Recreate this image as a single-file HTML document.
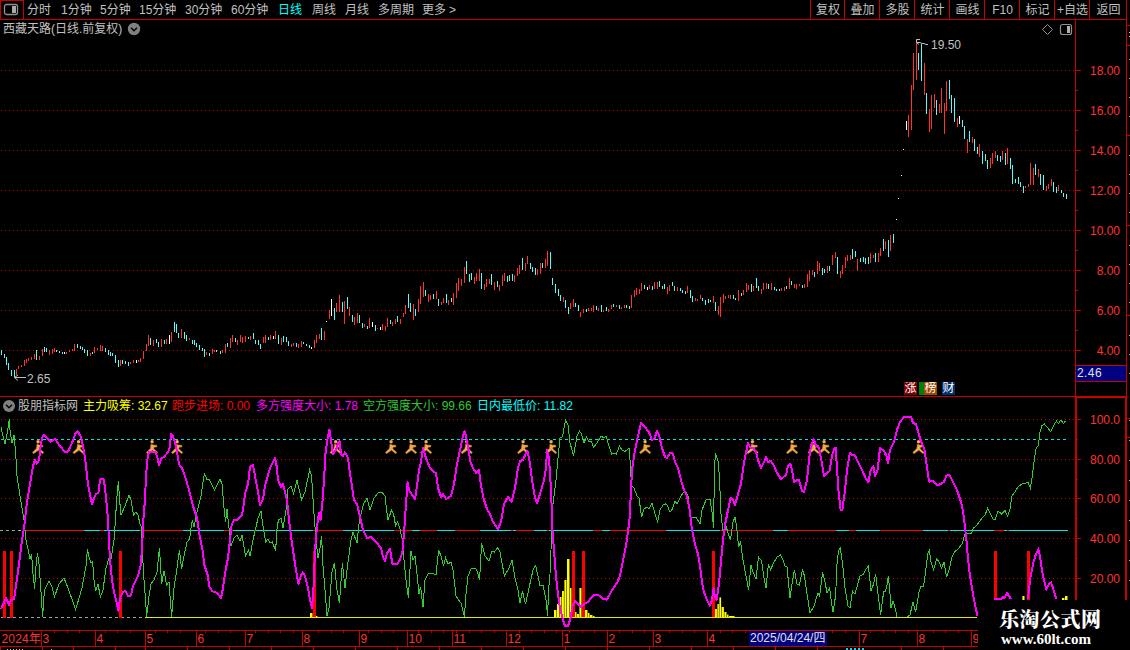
<!DOCTYPE html>
<html lang="zh-CN"><head><meta charset="utf-8"><title>西藏天路</title>
<style>
html,body{margin:0;padding:0;background:#000;}
body{width:1130px;height:650px;overflow:hidden;position:relative;font-family:"Liberation Sans","Noto Sans CJK SC",sans-serif;font-size:12px;color:#c0c0c0;}
#root{position:absolute;left:0;top:0;width:1130px;height:650px;overflow:hidden;background:#000}
#root span{position:absolute;white-space:nowrap;line-height:14px;}
.cy{color:#00ffff}
.btn{text-align:center}
.vs{position:absolute;top:0;width:1px;height:20px;background:#c80000}
.ax{right:10px;color:#ff3232;font-size:12px;transform:scaleY(1.07)}
.mv{position:absolute;top:630px;width:1px;height:17px;background:#c80000}
.bv{position:absolute;top:647px;width:1px;height:3px;background:#c80000}
.tk{position:absolute;top:631px;width:1px;height:2px;background:#c80000}
.mo{top:632px;color:#ff3232;letter-spacing:0.2px}
.pl{transform:scaleY(1.07);letter-spacing:0px}
.tag{color:#fff;width:13px;height:13px;line-height:13px!important;text-align:center;top:382px;overflow:hidden}
</style></head><body><div id="root">
<svg width="1130" height="650" viewBox="0 0 1130 650" style="position:absolute;left:0;top:0" shape-rendering="crispEdges">
<defs>
<g id="run" shape-rendering="auto">
<circle cx="6.1" cy="1.8" r="1.7" fill="#f4b04c"/>
<path d="M5 3.9 L7.6 5 L10.9 5.3 L10.9 6.9 L8.2 7.2 L7.8 8.8 L11.9 12.4 L10.6 13.7 L6.5 10.3 L1.6 13.7 L0.3 12.4 L4.3 8.6 Z" fill="#f0ac4c" stroke="#b87028" stroke-width="0.5"/>
</g>
</defs>
<line x1="1" y1="70.5" x2="1075" y2="70.5" stroke="#c80000" stroke-width="1" stroke-dasharray="1 3"/><line x1="1" y1="110.5" x2="1075" y2="110.5" stroke="#c80000" stroke-width="1" stroke-dasharray="1 3"/><line x1="1" y1="150.5" x2="1075" y2="150.5" stroke="#c80000" stroke-width="1" stroke-dasharray="1 3"/><line x1="1" y1="190.5" x2="1075" y2="190.5" stroke="#c80000" stroke-width="1" stroke-dasharray="1 3"/><line x1="1" y1="230.5" x2="1075" y2="230.5" stroke="#c80000" stroke-width="1" stroke-dasharray="1 3"/><line x1="1" y1="270.5" x2="1075" y2="270.5" stroke="#c80000" stroke-width="1" stroke-dasharray="1 3"/><line x1="1" y1="310.5" x2="1075" y2="310.5" stroke="#c80000" stroke-width="1" stroke-dasharray="1 3"/><line x1="1" y1="350.5" x2="1075" y2="350.5" stroke="#c80000" stroke-width="1" stroke-dasharray="1 3"/>
<line x1="1" y1="419.5" x2="1075" y2="419.5" stroke="#c80000" stroke-width="1" stroke-dasharray="1 3"/><line x1="1" y1="459.5" x2="1075" y2="459.5" stroke="#c80000" stroke-width="1" stroke-dasharray="1 3"/><line x1="1" y1="498.5" x2="1075" y2="498.5" stroke="#c80000" stroke-width="1" stroke-dasharray="1 3"/><line x1="1" y1="538.5" x2="1075" y2="538.5" stroke="#c80000" stroke-width="1" stroke-dasharray="1 3"/><line x1="1" y1="578.5" x2="1075" y2="578.5" stroke="#c80000" stroke-width="1" stroke-dasharray="1 3"/>
<line x1="1" y1="439.5" x2="1066" y2="439.5" stroke="#00e0e0" stroke-width="1" stroke-dasharray="3 3"/>
<line x1="1" y1="617.5" x2="145" y2="617.5" stroke="#a0a0a0" stroke-width="1" stroke-dasharray="3 3"/>
<path d="M16 369h1v6h-1zM18 366h1v3h-1zM21 365h1v2h-1zM24 360h1v6h-1zM26 359h1v4h-1zM28 358h1v3h-1zM31 357h1v3h-1zM34 354h1v5h-1zM39 356h1v4h-1zM42 349h1v7h-1zM49 350h1v5h-1zM52 349h1v5h-1zM54 348h1v4h-1zM66 352h1v2h-1zM69 350h1v2h-1zM72 349h1v2h-1zM74 344h1v7h-1zM90 353h1v3h-1zM94 347h1v6h-1zM97 348h1v2h-1zM100 345h1v6h-1zM102 346h1v5h-1zM120 360h1v6h-1zM130 362h1v2h-1zM133 360h1v3h-1zM138 360h1v2h-1zM140 358h1v4h-1zM143 351h1v8h-1zM146 344h1v7h-1zM148 335h1v11h-1zM153 340h1v6h-1zM161 339h1v8h-1zM166 339h1v5h-1zM171 332h1v10h-1zM181 329h1v9h-1zM189 338h1v2h-1zM206 352h1v3h-1zM212 349h1v5h-1zM214 350h1v2h-1zM222 350h1v3h-1zM225 344h1v9h-1zM230 338h1v10h-1zM232 335h1v7h-1zM237 340h1v5h-1zM240 335h1v7h-1zM242 337h1v6h-1zM245 336h1v6h-1zM250 336h1v4h-1zM263 337h1v6h-1zM265 335h1v8h-1zM270 335h1v5h-1zM275 331h1v8h-1zM281 338h1v7h-1zM291 344h1v3h-1zM293 343h1v3h-1zM298 344h1v4h-1zM301 341h1v6h-1zM314 340h1v8h-1zM316 335h1v8h-1zM319 334h1v5h-1zM324 331h1v9h-1zM329 310h1v9h-1zM336 303h1v9h-1zM339 295h1v17h-1zM344 301h1v23h-1zM349 307h1v9h-1zM354 317h1v8h-1zM357 313h1v10h-1zM364 324h1v3h-1zM369 318h1v10h-1zM377 328h1v1h-1zM382 324h1v6h-1zM385 326h1v5h-1zM387 318h1v9h-1zM392 322h1v4h-1zM395 319h1v5h-1zM400 319h1v5h-1zM403 313h1v4h-1zM405 305h1v9h-1zM413 304h1v16h-1zM418 299h1v13h-1zM420 286h1v18h-1zM423 282h1v15h-1zM428 294h1v8h-1zM430 295h1v5h-1zM436 291h1v8h-1zM441 302h1v3h-1zM443 298h1v5h-1zM448 300h1v5h-1zM453 293h1v12h-1zM456 283h1v15h-1zM458 278h1v13h-1zM461 279h1v7h-1zM464 267h1v16h-1zM474 277h1v7h-1zM476 273h1v8h-1zM479 269h1v12h-1zM484 284h1v6h-1zM486 279h1v8h-1zM489 279h1v5h-1zM494 282h1v8h-1zM499 285h1v6h-1zM502 275h1v11h-1zM504 273h1v8h-1zM514 275h1v7h-1zM517 268h1v8h-1zM519 265h1v9h-1zM525 263h1v8h-1zM527 256h1v8h-1zM537 269h1v6h-1zM540 263h1v11h-1zM545 259h1v9h-1zM547 251h1v15h-1zM563 297h1v5h-1zM570 303h1v6h-1zM573 299h1v8h-1zM580 312h1v5h-1zM583 309h1v4h-1zM588 308h1v3h-1zM591 308h1v3h-1zM593 305h1v7h-1zM598 308h1v3h-1zM603 310h1v2h-1zM608 309h1v3h-1zM611 305h1v4h-1zM616 305h1v2h-1zM621 307h1v2h-1zM624 305h1v3h-1zM631 295h1v13h-1zM634 290h1v7h-1zM636 288h1v7h-1zM639 289h1v5h-1zM641 283h1v8h-1zM649 285h1v4h-1zM654 282h1v7h-1zM657 282h1v7h-1zM667 287h1v7h-1zM669 285h1v6h-1zM677 287h1v4h-1zM687 286h1v7h-1zM695 298h1v3h-1zM697 299h1v2h-1zM700 295h1v4h-1zM713 296h1v7h-1zM718 306h1v9h-1zM720 297h1v20h-1zM723 294h1v9h-1zM725 296h1v3h-1zM728 295h1v3h-1zM730 295h1v4h-1zM738 290h1v11h-1zM743 290h1v5h-1zM746 283h1v9h-1zM748 285h1v5h-1zM753 286h1v5h-1zM761 289h1v5h-1zM763 283h1v7h-1zM766 283h1v6h-1zM771 283h1v7h-1zM781 288h1v3h-1zM784 287h1v4h-1zM789 278h1v11h-1zM794 284h1v4h-1zM796 284h1v5h-1zM799 284h1v2h-1zM804 284h1v4h-1zM807 274h1v13h-1zM809 270h1v11h-1zM812 270h1v5h-1zM817 261h1v13h-1zM819 263h1v8h-1zM827 266h1v7h-1zM832 255h1v10h-1zM835 252h1v6h-1zM840 271h1v7h-1zM842 265h1v9h-1zM845 257h1v11h-1zM847 255h1v6h-1zM850 255h1v5h-1zM857 259h1v12h-1zM870 253h1v10h-1zM873 255h1v3h-1zM878 253h1v9h-1zM880 248h1v8h-1zM885 241h1v8h-1zM890 235h1v16h-1zM908 115h1v22h-1zM911 85h1v45h-1zM913 53h1v37h-1zM916 43h1v37h-1zM924 63h1v32h-1zM929 109h1v23h-1zM931 95h1v34h-1zM934 94h1v14h-1zM939 104h1v9h-1zM941 88h1v25h-1zM944 103h1v31h-1zM946 81h1v30h-1zM957 118h1v9h-1zM967 139h1v14h-1zM972 137h1v6h-1zM979 144h1v13h-1zM990 158h1v10h-1zM992 153h1v11h-1zM995 151h1v7h-1zM1002 151h1v9h-1zM1007 148h1v16h-1zM1025 186h1v2h-1zM1028 184h1v3h-1zM1030 163h1v22h-1zM1033 168h1v17h-1zM1038 169h1v8h-1zM1046 186h1v5h-1zM1048 184h1v5h-1zM1051 179h1v7h-1zM1058 185h1v6h-1z" fill="#ff3232"/>
<path d="M1 350h1v5h-1zM4 354h1v4h-1zM6 357h1v8h-1zM8 363h1v7h-1zM11 370h1v6h-1zM14 370h1v7h-1zM36 350h1v10h-1zM44 347h1v5h-1zM46 348h1v4h-1zM56 350h1v2h-1zM59 351h1v2h-1zM62 352h1v2h-1zM77 344h1v4h-1zM80 346h1v3h-1zM82 347h1v3h-1zM84 349h1v4h-1zM87 350h1v6h-1zM92 352h1v2h-1zM105 348h1v4h-1zM108 350h1v5h-1zM110 352h1v4h-1zM112 353h1v3h-1zM115 355h1v8h-1zM118 360h1v7h-1zM122 360h1v4h-1zM125 361h1v3h-1zM128 362h1v4h-1zM150 338h1v7h-1zM156 339h1v4h-1zM158 342h1v5h-1zM164 340h1v4h-1zM174 322h1v10h-1zM176 324h1v9h-1zM178 333h1v5h-1zM184 332h1v7h-1zM186 335h1v6h-1zM192 340h1v4h-1zM194 340h1v5h-1zM196 343h1v4h-1zM199 345h1v5h-1zM202 348h1v3h-1zM204 349h1v8h-1zM209 353h1v3h-1zM216 350h1v2h-1zM220 351h1v3h-1zM227 343h1v4h-1zM235 338h1v4h-1zM248 337h1v2h-1zM253 333h1v6h-1zM255 340h1v4h-1zM258 340h1v5h-1zM260 344h1v5h-1zM268 337h1v3h-1zM278 335h1v9h-1zM283 336h1v6h-1zM286 337h1v5h-1zM288 341h1v5h-1zM296 343h1v4h-1zM303 342h1v2h-1zM306 344h1v2h-1zM309 345h1v3h-1zM321 328h1v12h-1zM334 308h1v12h-1zM342 302h1v10h-1zM347 297h1v12h-1zM352 315h1v7h-1zM359 315h1v8h-1zM362 323h1v5h-1zM367 326h1v3h-1zM375 325h1v6h-1zM390 320h1v4h-1zM397 316h1v6h-1zM408 294h1v14h-1zM410 303h1v9h-1zM415 309h1v7h-1zM425 290h1v6h-1zM433 294h1v5h-1zM438 299h1v7h-1zM446 294h1v9h-1zM451 298h1v4h-1zM466 261h1v13h-1zM469 274h1v8h-1zM471 273h1v7h-1zM481 273h1v16h-1zM491 274h1v11h-1zM497 281h1v6h-1zM507 276h1v6h-1zM509 275h1v6h-1zM512 274h1v7h-1zM522 258h1v12h-1zM530 263h1v6h-1zM532 267h1v5h-1zM535 268h1v7h-1zM542 263h1v5h-1zM550 252h1v17h-1zM552 278h1v7h-1zM555 284h1v9h-1zM558 289h1v7h-1zM560 295h1v6h-1zM565 300h1v8h-1zM568 307h1v7h-1zM575 303h1v4h-1zM578 305h1v6h-1zM586 309h1v3h-1zM596 306h1v4h-1zM601 305h1v7h-1zM606 307h1v4h-1zM613 304h1v3h-1zM619 305h1v4h-1zM626 305h1v3h-1zM629 306h1v3h-1zM644 285h1v4h-1zM652 286h1v4h-1zM659 281h1v6h-1zM662 286h1v3h-1zM664 284h1v5h-1zM672 282h1v4h-1zM674 286h1v5h-1zM680 288h1v3h-1zM682 290h1v3h-1zM685 291h1v3h-1zM690 290h1v8h-1zM692 296h1v6h-1zM702 298h1v3h-1zM705 300h1v5h-1zM708 299h1v4h-1zM710 300h1v2h-1zM715 302h1v9h-1zM733 295h1v4h-1zM735 298h1v2h-1zM741 293h1v3h-1zM751 284h1v8h-1zM756 278h1v10h-1zM758 286h1v5h-1zM768 284h1v5h-1zM774 287h1v3h-1zM776 289h1v2h-1zM779 289h1v2h-1zM786 286h1v3h-1zM791 281h1v4h-1zM802 285h1v3h-1zM814 272h1v5h-1zM822 268h1v7h-1zM824 269h1v4h-1zM829 266h1v5h-1zM837 257h1v17h-1zM852 249h1v10h-1zM855 251h1v6h-1zM860 258h1v4h-1zM863 257h1v5h-1zM865 258h1v6h-1zM868 257h1v7h-1zM875 253h1v9h-1zM883 239h1v12h-1zM888 240h1v17h-1zM893 234h1v9h-1zM918 53h1v17h-1zM921 44h1v37h-1zM926 93h1v21h-1zM936 100h1v15h-1zM949 80h1v19h-1zM951 95h1v18h-1zM954 98h1v24h-1zM962 120h1v7h-1zM964 126h1v13h-1zM969 131h1v11h-1zM974 139h1v12h-1zM977 147h1v7h-1zM982 151h1v13h-1zM985 154h1v7h-1zM987 160h1v9h-1zM997 155h1v6h-1zM1000 156h1v6h-1zM1005 153h1v12h-1zM1010 158h1v11h-1zM1012 165h1v19h-1zM1015 179h1v4h-1zM1018 177h1v7h-1zM1020 182h1v5h-1zM1023 186h1v7h-1zM1035 164h1v11h-1zM1040 174h1v11h-1zM1043 175h1v15h-1zM1053 182h1v10h-1zM1056 187h1v6h-1zM1061 190h1v3h-1zM1063 193h1v4h-1zM1066 194h1v5h-1z" fill="#54fcfc"/>
<path d="M64 352h1v2h-1zM136 360h1v3h-1zM169 335h1v9h-1zM273 336h1v3h-1zM311 347h1v2h-1zM326 321h1v1h-1zM331 299h1v17h-1zM372 322h1v5h-1zM380 327h1v3h-1zM647 287h1v3h-1zM896 219h1v1h-1zM898 198h1v1h-1zM901 175h1v1h-1zM903 149h1v1h-1zM906 121h1v9h-1zM959 116h1v8h-1z" fill="#ffffff"/>

<rect x="310.0" y="613.0" width="2.5" height="4.5" fill="#ffff00" shape-rendering="auto"/><rect x="316.0" y="616.0" width="1.5" height="1.5" fill="#ffff00" shape-rendering="auto"/><rect x="554.0" y="610.0" width="2.5" height="7.5" fill="#ffff00" shape-rendering="auto"/><rect x="557.0" y="604.0" width="2.1" height="13.5" fill="#ffff00" shape-rendering="auto"/><rect x="559.6" y="597.0" width="1.9" height="20.5" fill="#ffff00" shape-rendering="auto"/><rect x="562.0" y="591.0" width="1.9" height="26.5" fill="#ffff00" shape-rendering="auto"/><rect x="564.4" y="580.0" width="2.1" height="37.5" fill="#ffff00" shape-rendering="auto"/><rect x="567.0" y="559.0" width="2.5" height="58.5" fill="#ffff00" shape-rendering="auto"/><rect x="570.0" y="588.0" width="1.5" height="29.5" fill="#ffff00" shape-rendering="auto"/><rect x="575.0" y="612.0" width="1.5" height="5.5" fill="#ffff00" shape-rendering="auto"/><rect x="577.0" y="614.0" width="1.9" height="3.5" fill="#ffff00" shape-rendering="auto"/><rect x="579.4" y="588.0" width="2.1" height="29.5" fill="#ffff00" shape-rendering="auto"/><rect x="585.0" y="610.0" width="2.5" height="7.5" fill="#ffff00" shape-rendering="auto"/><rect x="588.0" y="613.0" width="1.5" height="4.5" fill="#ffff00" shape-rendering="auto"/><rect x="590.0" y="615.0" width="2.5" height="2.5" fill="#ffff00" shape-rendering="auto"/><rect x="593.0" y="616.0" width="1.5" height="1.5" fill="#ffff00" shape-rendering="auto"/><rect x="715.0" y="609.0" width="1.9" height="8.5" fill="#ffff00" shape-rendering="auto"/><rect x="717.4" y="604.0" width="1.5" height="13.5" fill="#ffff00" shape-rendering="auto"/><rect x="719.4" y="597.4" width="1.7" height="20.1" fill="#ffff00" shape-rendering="auto"/><rect x="721.6" y="607.0" width="2.3" height="10.5" fill="#ffff00" shape-rendering="auto"/><rect x="724.4" y="612.0" width="2.1" height="5.5" fill="#ffff00" shape-rendering="auto"/><rect x="727.0" y="614.6" width="1.5" height="2.9" fill="#ffff00" shape-rendering="auto"/><rect x="729.0" y="616.0" width="5.5" height="1.5" fill="#ffff00" shape-rendering="auto"/><rect x="1022.4" y="596.0" width="2.1" height="4.0" fill="#ffff00" shape-rendering="auto"/><rect x="1062.0" y="598.0" width="2.5" height="2.0" fill="#ffff00" shape-rendering="auto"/><rect x="1065.0" y="596.0" width="2.5" height="4.0" fill="#ffff00" shape-rendering="auto"/><rect x="3.0" y="551.0" width="3.0" height="66.5" fill="#ff0000"/><rect x="10.0" y="551.0" width="3.0" height="66.5" fill="#ff0000"/><rect x="119.0" y="551.0" width="3.0" height="66.5" fill="#ff0000"/><rect x="313.0" y="551.0" width="3.0" height="66.5" fill="#ff0000"/><rect x="572.0" y="551.0" width="3.0" height="66.5" fill="#ff0000"/><rect x="582.0" y="551.0" width="3.0" height="66.5" fill="#ff0000"/><rect x="712.0" y="551.0" width="3.0" height="66.5" fill="#ff0000"/><rect x="994.0" y="551.0" width="3.0" height="49.0" fill="#ff0000"/><rect x="1027.4" y="551.0" width="2.6" height="49.0" fill="#ff0000"/>
<line x1="0" y1="530.5" x2="23" y2="530.5" stroke="#a0a0a0" stroke-width="1" stroke-dasharray="3 3"/><rect x="23" y="529.6" width="61" height="1.8" fill="#ff0000"/><rect x="84" y="529.6" width="16" height="1.8" fill="#00e8e8"/><rect x="100" y="529.6" width="4" height="1.8" fill="#ff0000"/><rect x="104" y="529.6" width="36" height="1.8" fill="#00e8e8"/><rect x="140" y="529.6" width="43" height="1.8" fill="#ff0000"/><rect x="183" y="529.6" width="37" height="1.8" fill="#00e8e8"/><rect x="220" y="529.6" width="4" height="1.8" fill="#00e8e8"/><rect x="224" y="529.6" width="9" height="1.8" fill="#ff0000"/><rect x="233" y="529.6" width="21" height="1.8" fill="#00e8e8"/><rect x="254" y="529.6" width="2" height="1.8" fill="#ff0000"/><rect x="256" y="529.6" width="19" height="1.8" fill="#00e8e8"/><rect x="275" y="529.6" width="2" height="1.8" fill="#ff0000"/><rect x="277" y="529.6" width="36" height="1.8" fill="#00e8e8"/><rect x="313" y="529.6" width="30" height="1.8" fill="#ff0000"/><rect x="343" y="529.6" width="51" height="1.8" fill="#00e8e8"/><rect x="394" y="529.6" width="18" height="1.8" fill="#ff0000"/><rect x="412" y="529.6" width="8" height="1.8" fill="#00e8e8"/><rect x="420" y="529.6" width="17" height="1.8" fill="#ff0000"/><rect x="437" y="529.6" width="9" height="1.8" fill="#00e8e8"/><rect x="446" y="529.6" width="9" height="1.8" fill="#00e8e8"/><rect x="455" y="529.6" width="25" height="1.8" fill="#ff0000"/><rect x="480" y="529.6" width="31" height="1.8" fill="#00e8e8"/><rect x="511" y="529.6" width="2" height="1.8" fill="#ff0000"/><rect x="513" y="529.6" width="3" height="1.8" fill="#00e8e8"/><rect x="516" y="529.6" width="18" height="1.8" fill="#ff0000"/><rect x="534" y="529.6" width="13" height="1.8" fill="#00e8e8"/><rect x="547" y="529.6" width="2" height="1.8" fill="#ff0000"/><rect x="549" y="529.6" width="44" height="1.8" fill="#00e8e8"/><rect x="593" y="529.6" width="9" height="1.8" fill="#ff0000"/><rect x="602" y="529.6" width="8" height="1.8" fill="#00e8e8"/><rect x="610" y="529.6" width="56" height="1.8" fill="#ff0000"/><rect x="660" y="529.6" width="6" height="1.8" fill="#ff0000"/><rect x="666" y="529.6" width="54" height="1.8" fill="#00e8e8"/><rect x="720" y="529.6" width="53" height="1.8" fill="#ff0000"/><rect x="773" y="529.6" width="15" height="1.8" fill="#00e8e8"/><rect x="788" y="529.6" width="48" height="1.8" fill="#ff0000"/><rect x="836" y="529.6" width="13" height="1.8" fill="#00e8e8"/><rect x="849" y="529.6" width="7" height="1.8" fill="#ff0000"/><rect x="856" y="529.6" width="24" height="1.8" fill="#00e8e8"/><rect x="880" y="529.6" width="6" height="1.8" fill="#ff0000"/><rect x="886" y="529.6" width="37" height="1.8" fill="#ff0000"/><rect x="923" y="529.6" width="25" height="1.8" fill="#00e8e8"/><rect x="948" y="529.6" width="2" height="1.8" fill="#ff0000"/><rect x="950" y="529.6" width="44" height="1.8" fill="#00e8e8"/><rect x="994" y="529.6" width="10" height="1.8" fill="#ff0000"/><rect x="1004" y="529.6" width="3" height="1.8" fill="#00e8e8"/><rect x="1007" y="529.6" width="2" height="1.8" fill="#ff0000"/><rect x="1009" y="529.6" width="59" height="1.8" fill="#00e8e8"/>
<polyline points="1.0,427.0 3.0,436.0 5.0,444.0 7.0,434.0 9.4,419.0 10.0,430.0 12.0,443.0 14.0,435.0 15.6,452.0 17.0,476.0 20.0,496.0 23.0,514.0 24.0,520.0 26.0,540.0 29.0,554.0 30.0,559.0 31.6,554.0 33.0,574.0 34.6,589.0 36.0,566.0 37.4,553.0 39.0,564.0 41.0,592.0 42.6,617.0 44.4,590.0 49.0,581.0 52.4,588.0 54.4,597.0 59.0,584.0 64.0,578.0 68.0,588.0 75.6,609.6 82.0,588.0 86.0,566.0 87.4,549.0 89.0,557.0 91.0,563.0 92.6,562.0 94.0,580.0 95.6,591.0 98.0,584.0 100.4,597.0 103.0,590.0 106.0,568.0 109.0,558.0 111.0,559.0 114.0,540.0 115.6,518.0 116.6,500.0 118.4,481.0 119.6,500.0 121.0,515.0 125.0,506.0 129.0,495.0 131.0,500.0 133.6,515.0 136.0,512.0 138.0,515.0 140.0,524.0 141.0,526.0 142.4,552.0 144.0,580.0 145.6,600.0 146.6,617.0 149.0,596.0 151.0,584.0 154.0,580.0 157.0,572.0 159.4,548.0 160.6,566.0 161.6,584.0 164.0,571.0 166.6,585.0 169.0,582.0 171.6,617.0 174.0,588.0 177.0,568.0 179.4,550.0 181.6,569.0 184.0,556.0 187.0,542.0 189.6,539.0 191.0,528.0 192.4,520.0 194.0,527.0 197.0,512.0 201.0,496.0 204.4,473.0 207.0,480.0 209.0,479.0 214.4,490.0 220.0,479.0 222.0,484.0 224.0,508.0 225.6,522.0 227.0,509.0 229.0,528.0 231.0,546.0 234.0,538.0 237.0,535.0 240.0,541.0 242.0,535.0 245.6,556.0 248.4,550.0 250.0,556.0 253.0,540.0 256.0,527.0 258.0,518.0 261.0,511.0 263.0,526.0 265.6,542.0 268.0,539.0 270.0,543.0 272.4,542.0 275.6,551.0 277.0,529.0 278.4,520.0 281.0,518.0 283.0,528.0 285.0,516.0 287.0,504.0 288.0,489.0 291.0,486.0 293.6,494.0 297.0,480.0 299.0,489.0 301.6,500.0 305.0,492.0 309.6,470.0 311.6,476.0 313.0,499.0 314.0,514.0 315.6,535.0 318.0,558.0 320.0,548.0 321.6,536.0 323.0,566.0 325.0,590.0 327.0,616.0 329.0,608.0 332.0,572.0 334.4,563.0 337.0,590.0 339.4,603.0 342.4,563.0 345.0,588.0 348.0,562.0 351.0,540.0 353.0,532.0 357.0,543.0 359.0,524.0 361.0,514.0 363.6,504.0 367.0,498.0 370.0,510.0 374.0,498.0 378.0,493.0 382.0,492.0 385.0,496.0 386.4,508.0 388.0,520.0 391.6,510.0 393.6,514.0 395.6,526.0 397.6,522.0 400.0,529.0 402.0,538.0 404.0,560.0 406.0,580.0 408.4,598.0 411.0,551.0 413.0,560.0 415.0,556.0 417.0,574.0 419.0,594.0 420.6,587.0 423.0,607.0 425.0,580.0 428.0,574.0 432.0,573.0 436.0,575.0 438.6,550.0 441.0,556.0 443.6,566.0 445.6,558.0 448.0,564.0 451.0,562.0 453.0,570.0 456.0,596.0 458.0,599.0 461.0,603.0 464.4,617.0 466.0,594.0 468.0,576.0 471.0,569.0 475.6,568.4 477.6,572.0 479.6,580.0 481.6,543.0 485.0,556.0 489.0,561.0 492.0,551.0 494.4,552.0 497.6,547.6 500.0,552.0 504.4,576.0 509.0,568.0 512.0,560.0 515.0,578.0 518.0,590.0 520.0,603.0 522.4,591.0 525.6,604.0 529.0,588.0 533.0,570.0 535.6,565.6 538.0,576.0 540.0,586.0 543.0,585.0 546.0,600.0 547.6,616.0 548.6,590.0 550.0,574.0 551.0,550.0 552.4,512.0 553.0,504.0 556.0,480.0 558.0,458.0 560.0,438.0 562.4,437.0 565.6,420.0 568.0,425.0 570.0,443.0 573.6,455.6 577.0,436.0 579.4,431.0 581.0,433.0 584.0,443.0 586.4,437.0 589.0,442.0 591.0,441.0 593.6,447.0 597.0,443.0 601.0,436.0 604.0,438.0 606.0,436.0 609.0,446.0 611.6,454.0 614.0,453.0 616.4,454.0 619.4,446.0 622.0,450.0 625.0,451.6 629.0,448.0 630.0,460.0 631.6,486.0 634.0,488.0 637.0,496.0 639.0,498.0 641.6,517.0 644.0,509.0 647.0,507.0 649.0,509.0 652.0,503.0 655.0,514.0 657.6,522.0 660.0,510.0 663.0,505.0 665.6,504.0 667.0,505.0 670.0,512.0 672.4,509.0 675.0,501.0 677.0,504.0 681.0,496.0 684.0,492.0 686.0,492.4 688.0,496.0 689.6,512.0 691.0,518.0 696.0,517.0 700.0,524.0 702.0,510.0 706.0,500.0 710.0,499.0 712.0,512.0 713.6,528.0 714.4,470.0 715.4,453.0 718.0,461.0 719.4,476.0 721.0,514.0 723.6,536.0 726.0,526.0 728.0,533.0 730.4,540.0 733.0,522.0 735.0,517.0 736.6,527.0 738.6,547.0 740.6,542.0 743.0,560.0 746.0,576.0 748.6,590.0 751.0,565.0 753.0,572.0 756.0,579.0 758.4,557.0 761.6,561.0 764.0,578.0 766.0,588.0 768.4,564.0 770.6,570.0 773.0,564.0 777.0,557.0 780.6,555.0 783.0,560.0 785.0,566.0 787.0,567.0 790.0,598.0 792.6,580.0 794.4,570.0 797.0,584.0 799.4,585.0 802.6,569.0 804.4,576.0 807.0,594.0 810.0,613.0 814.0,606.0 818.0,593.0 819.6,596.0 822.6,572.0 825.0,582.0 827.0,593.0 829.6,588.0 831.6,604.0 833.0,612.0 835.6,596.0 837.0,564.0 838.4,551.0 840.4,548.0 843.0,568.0 845.0,588.0 848.0,606.0 850.0,608.0 852.4,591.0 855.0,594.0 860.0,576.0 863.6,574.0 866.0,569.0 868.4,566.0 871.0,591.0 873.6,584.0 875.6,574.0 878.0,594.0 880.6,615.0 883.6,592.0 885.6,591.0 887.0,585.0 888.4,575.6 890.0,594.0 891.0,608.0 893.0,601.0 894.4,605.0 897.0,617.0 907.0,617.0 910.0,615.0 913.0,602.0 915.6,612.0 919.0,592.0 921.0,586.0 923.6,586.4 926.0,568.0 928.0,553.0 929.4,550.0 931.0,562.0 933.6,570.0 936.6,558.6 939.0,562.0 941.6,568.0 944.0,562.0 946.6,577.0 949.0,570.0 952.0,557.0 954.4,552.0 958.0,549.0 962.0,544.0 965.0,534.0 968.0,533.0 971.0,534.0 973.6,528.0 977.0,525.0 982.0,518.0 985.0,515.0 987.6,508.4 990.0,513.0 993.0,519.0 995.0,519.6 998.0,511.0 1001.6,514.0 1005.0,510.6 1007.6,516.4 1010.0,509.0 1012.0,496.0 1015.0,492.0 1018.0,487.0 1022.0,484.0 1028.0,482.4 1030.4,488.0 1032.0,478.0 1034.0,462.0 1036.0,449.0 1038.4,445.0 1040.0,432.0 1042.0,425.6 1044.4,424.0 1047.0,427.0 1050.6,431.6 1054.0,425.0 1056.4,421.0 1058.4,423.6 1061.0,420.0 1063.6,423.6 1065.6,420.6" fill="none" stroke="#32cd32" stroke-width="1" shape-rendering="crispEdges"/>
<rect x="145" y="617" width="832" height="1.4" fill="#e8e800"/>
<use href="#run" x="32.0" y="440"/><use href="#run" x="72.5" y="440"/><use href="#run" x="146.0" y="440"/><use href="#run" x="171.0" y="440"/><use href="#run" x="329.6" y="440"/><use href="#run" x="385.0" y="440"/><use href="#run" x="405.0" y="440"/><use href="#run" x="420.0" y="440"/><use href="#run" x="460.6" y="440"/><use href="#run" x="517.0" y="440"/><use href="#run" x="545.0" y="440"/><use href="#run" x="639.0" y="440"/><use href="#run" x="746.4" y="440"/><use href="#run" x="786.0" y="440"/><use href="#run" x="807.6" y="440"/><use href="#run" x="818.0" y="440"/><use href="#run" x="912.4" y="440"/>
<polyline points="1.0,609.0 6.0,598.0 9.0,605.0 11.0,600.0 14.0,599.0 16.0,586.0 19.0,564.0 22.0,540.0 24.0,528.0 27.0,502.0 30.0,484.0 33.0,466.0 35.0,460.0 37.0,463.6 39.0,460.0 41.0,443.0 42.4,437.0 44.4,435.0 48.0,439.0 50.4,441.6 55.0,439.0 60.0,446.0 65.0,452.0 68.0,451.6 72.0,443.0 75.6,433.0 77.6,431.0 81.0,437.0 83.0,446.0 85.0,458.0 86.4,470.0 88.0,484.0 90.0,494.0 92.0,504.0 94.0,498.0 96.0,494.0 98.4,493.0 100.0,480.0 102.0,478.4 104.0,480.0 105.6,494.0 107.0,508.0 108.0,520.0 109.0,540.0 110.0,560.0 112.0,580.0 114.0,592.0 117.0,604.0 118.4,611.0 120.0,598.0 123.0,592.0 125.6,591.0 128.0,596.0 131.0,595.6 133.0,586.0 138.0,576.0 141.0,564.0 142.4,540.0 143.6,516.0 145.0,500.0 146.0,476.0 147.6,458.0 149.0,452.0 155.0,451.6 157.0,456.0 159.0,465.0 161.6,458.0 164.0,457.0 168.0,452.0 169.6,448.0 171.0,434.0 173.0,436.0 176.0,446.0 178.0,458.0 179.0,464.4 182.0,468.0 185.0,476.0 189.0,490.0 193.0,506.0 197.0,518.0 200.0,538.0 203.0,552.0 204.0,564.0 208.0,576.0 209.0,586.0 212.0,591.0 217.0,593.0 221.0,598.0 223.0,588.0 225.0,574.0 226.0,568.0 228.0,558.0 230.0,540.0 231.6,525.0 234.0,520.0 237.0,520.0 242.0,515.0 244.0,503.0 245.0,494.0 248.0,484.0 250.0,467.0 253.0,465.0 255.0,476.0 258.0,492.0 260.0,505.0 263.0,499.0 265.0,486.0 270.0,468.0 275.0,458.0 276.6,466.0 278.0,480.0 281.0,487.0 283.0,484.0 285.6,494.0 287.0,500.0 289.0,520.0 291.0,536.0 293.0,550.0 295.6,568.0 298.4,584.0 301.0,575.0 303.0,572.4 305.0,576.0 308.0,588.0 310.0,600.0 312.0,608.0 313.6,586.0 315.0,550.0 317.0,526.0 319.0,513.0 320.6,520.0 322.4,503.0 324.0,480.0 325.6,452.0 328.0,436.0 329.4,429.6 331.0,440.0 333.0,454.0 336.0,450.0 338.0,443.0 339.6,441.0 341.0,454.0 343.0,456.0 345.0,452.4 348.0,458.0 350.0,474.0 352.0,486.0 354.0,500.0 357.0,504.0 360.0,517.0 363.0,530.0 367.0,538.0 371.0,537.0 376.0,542.0 381.0,548.0 383.0,557.0 385.0,561.0 387.0,553.0 390.0,549.0 392.4,564.0 397.0,564.0 400.0,560.0 402.4,552.0 404.0,534.0 405.0,518.0 406.0,504.0 407.6,482.0 409.0,490.0 412.0,495.0 415.0,499.0 417.0,486.0 419.0,470.0 421.0,462.0 423.0,448.0 425.0,455.0 427.0,461.0 430.0,468.0 434.0,472.0 436.0,473.0 438.0,488.0 441.0,497.0 443.0,494.0 445.6,498.0 446.0,499.0 451.0,496.0 454.0,484.0 457.0,464.0 460.0,450.0 462.6,438.0 464.4,431.0 466.0,436.0 468.0,446.0 470.4,462.0 473.0,468.0 476.0,473.0 479.0,470.0 481.0,486.0 484.0,500.0 487.0,509.0 490.0,514.0 493.0,522.0 498.0,529.0 501.0,522.0 504.0,504.0 508.0,497.0 511.6,502.0 515.0,488.0 518.0,468.0 520.0,461.0 523.0,460.0 525.6,454.0 527.6,451.0 530.0,464.0 532.0,480.0 535.0,498.0 537.0,503.0 540.0,494.0 544.0,480.0 546.0,468.0 547.0,450.0 549.0,458.0 550.4,480.0 551.6,505.0 552.4,530.0 554.0,550.0 556.0,576.0 558.0,594.0 560.0,608.0 562.4,618.0 565.0,626.0 568.0,626.0 570.4,619.0 572.4,606.0 575.0,601.0 578.0,604.0 581.0,607.0 584.0,604.0 588.0,602.0 593.0,595.6 598.0,594.6 603.0,599.0 607.0,599.6 612.0,590.0 617.0,583.0 620.0,576.0 623.0,560.0 626.0,546.0 628.0,532.0 629.6,518.0 630.5,500.0 632.0,470.0 635.0,450.0 638.0,436.0 641.0,423.0 644.0,426.0 649.0,432.0 652.0,440.0 654.4,439.0 657.0,431.0 659.0,435.0 662.0,448.0 665.0,457.0 667.0,458.0 670.0,453.0 673.0,453.6 675.0,462.0 678.0,468.0 681.0,480.0 684.0,490.0 687.0,496.0 689.0,506.0 690.0,512.0 692.0,530.0 695.0,544.0 698.0,554.0 700.0,566.0 702.0,582.0 704.0,592.0 707.0,600.0 710.0,605.6 712.0,600.0 713.6,588.0 715.0,597.0 716.6,600.0 719.0,584.0 721.0,562.0 723.0,540.0 725.0,525.0 728.0,510.0 730.6,498.0 733.0,500.0 735.0,505.0 738.0,494.0 741.0,484.0 742.4,474.0 744.0,462.0 746.0,453.0 748.0,443.0 750.4,448.0 753.0,447.6 756.0,452.0 758.0,460.0 761.0,468.0 764.0,462.0 766.0,457.0 768.0,462.0 771.0,461.0 774.0,466.0 777.0,473.0 781.0,479.0 786.0,475.0 788.0,466.0 790.4,464.0 792.0,470.0 794.0,482.0 797.0,480.0 799.0,480.0 802.0,491.0 804.0,492.0 807.0,480.0 809.0,460.0 811.0,446.0 813.6,439.0 816.0,446.0 819.0,447.6 822.0,464.0 824.0,476.0 827.0,473.0 829.6,471.0 832.0,456.0 834.0,449.0 835.6,447.6 837.0,468.0 838.6,492.0 840.6,509.6 842.4,509.6 845.0,490.0 847.0,470.0 850.0,452.4 852.0,455.0 855.0,455.6 858.0,462.0 862.0,470.0 866.0,479.0 868.4,482.4 870.4,471.0 873.4,466.0 875.0,476.0 877.6,470.0 880.0,448.0 884.0,451.0 885.6,455.0 886.0,454.0 888.0,463.0 890.0,450.0 894.0,442.0 897.0,430.0 900.0,422.0 904.0,417.0 911.0,416.6 913.0,423.0 916.0,424.0 919.0,435.0 922.0,444.0 924.4,449.0 926.0,460.0 927.6,472.0 929.0,481.6 933.0,481.0 937.0,485.0 940.0,484.4 944.0,482.0 946.4,475.6 949.6,475.0 953.0,482.0 957.0,490.0 961.0,502.0 963.0,511.0 965.0,527.0 966.4,540.0 968.0,558.0 970.0,576.0 972.0,588.0 974.0,600.0 976.0,609.0 977.4,616.0" fill="none" stroke="#ff00ff" stroke-width="2" stroke-linejoin="round" shape-rendering="crispEdges"/>
<rect x="978" y="600" width="152" height="50" fill="#000"/>
<polyline points="994.0,599.0 1001.0,599.0 1003.0,597.0 1004.4,598.0 1007.0,593.0 1009.0,596.0 1011.0,599.0" fill="none" stroke="#ff00ff" stroke-width="2" shape-rendering="crispEdges"/>
<polyline points="1028.0,599.0 1030.0,580.0 1033.0,564.0 1036.0,554.0 1038.4,549.6 1040.0,556.0 1042.0,570.0 1044.0,580.0 1046.4,589.0 1049.0,584.0 1051.0,582.4 1053.0,588.0 1055.0,595.0 1056.4,599.0" fill="none" stroke="#ff00ff" stroke-width="2" shape-rendering="crispEdges"/>
<!-- frame lines -->
<rect x="0" y="19" width="1127" height="1" fill="#c80000"/>
<rect x="0" y="0" width="1" height="20" fill="#c80000"/>
<rect x="0" y="0" width="24" height="1" fill="#c80000"/>
<rect x="23" y="0" width="1" height="20" fill="#c80000"/>
<rect x="0" y="396" width="1075" height="1" fill="#c80000"/>
<rect x="1075" y="396" width="52" height="2" fill="#c80000"/>
<rect x="1075" y="20" width="1" height="377" fill="#c80000"/><rect x="1075" y="396" width="2" height="204" fill="#c80000"/>
<rect x="1126" y="0" width="1" height="600" fill="#c80000"/><rect x="1125" y="397" width="1" height="203" fill="#c80000"/><rect x="1076" y="365" width="50" height="1" fill="#c80000"/><rect x="1076" y="381" width="50" height="1" fill="#c80000"/><rect x="1127" y="418" width="3" height="1" fill="#c80000"/><rect x="1127" y="437" width="3" height="1" fill="#c80000"/>
<rect x="1076" y="70" width="5" height="1" fill="#c80000"/><rect x="1076" y="110" width="5" height="1" fill="#c80000"/><rect x="1076" y="150" width="5" height="1" fill="#c80000"/><rect x="1076" y="190" width="5" height="1" fill="#c80000"/><rect x="1076" y="230" width="5" height="1" fill="#c80000"/><rect x="1076" y="270" width="5" height="1" fill="#c80000"/><rect x="1076" y="310" width="5" height="1" fill="#c80000"/><rect x="1076" y="350" width="5" height="1" fill="#c80000"/><rect x="1076" y="90" width="2" height="1" fill="#c80000"/><rect x="1076" y="130" width="2" height="1" fill="#c80000"/><rect x="1076" y="170" width="2" height="1" fill="#c80000"/><rect x="1076" y="210" width="2" height="1" fill="#c80000"/><rect x="1076" y="250" width="2" height="1" fill="#c80000"/><rect x="1076" y="290" width="2" height="1" fill="#c80000"/><rect x="1076" y="330" width="2" height="1" fill="#c80000"/><rect x="1077" y="419" width="4" height="1" fill="#c80000"/><rect x="1077" y="459" width="4" height="1" fill="#c80000"/><rect x="1077" y="498" width="4" height="1" fill="#c80000"/><rect x="1077" y="538" width="4" height="1" fill="#c80000"/><rect x="1077" y="578" width="4" height="1" fill="#c80000"/><rect x="1077" y="439" width="1" height="1" fill="#c80000"/><rect x="1077" y="479" width="1" height="1" fill="#c80000"/><rect x="1077" y="518" width="1" height="1" fill="#c80000"/><rect x="1077" y="558" width="1" height="1" fill="#c80000"/><rect x="1127" y="25" width="3" height="1" fill="#c80000"/><rect x="1127" y="45" width="3" height="1" fill="#c80000"/><rect x="1127" y="135" width="3" height="1" fill="#c80000"/><rect x="1127" y="225" width="3" height="1" fill="#c80000"/><rect x="1127" y="315" width="3" height="1" fill="#c80000"/><rect x="1129" y="32" width="1" height="1" fill="#c0c0c0"/><rect x="1129" y="36" width="1" height="1" fill="#c0c0c0"/><rect x="1129" y="59" width="1" height="1" fill="#c0c0c0"/><rect x="1129" y="78" width="1" height="1" fill="#c0c0c0"/><rect x="1129" y="97" width="1" height="1" fill="#c0c0c0"/><rect x="1129" y="116" width="1" height="1" fill="#c0c0c0"/><rect x="1129" y="155" width="1" height="1" fill="#c0c0c0"/><rect x="1129" y="174" width="1" height="1" fill="#c0c0c0"/><rect x="1129" y="193" width="1" height="1" fill="#c0c0c0"/><rect x="1129" y="212" width="1" height="1" fill="#c0c0c0"/><rect x="1129" y="245" width="1" height="1" fill="#c0c0c0"/><rect x="1129" y="264" width="1" height="1" fill="#c0c0c0"/><rect x="1129" y="283" width="1" height="1" fill="#c0c0c0"/><rect x="1129" y="302" width="1" height="1" fill="#c0c0c0"/><rect x="1129" y="335" width="1" height="1" fill="#c0c0c0"/><rect x="1129" y="354" width="1" height="1" fill="#c0c0c0"/><rect x="1129" y="373" width="1" height="1" fill="#c0c0c0"/><rect x="1129" y="420" width="1" height="1" fill="#c0c0c0"/><rect x="1129" y="440" width="1" height="1" fill="#c0c0c0"/><rect x="1129" y="460" width="1" height="1" fill="#c0c0c0"/><rect x="1129" y="480" width="1" height="1" fill="#c0c0c0"/><rect x="1129" y="500" width="1" height="1" fill="#c0c0c0"/><rect x="1129" y="520" width="1" height="1" fill="#c0c0c0"/><rect x="1129" y="540" width="1" height="1" fill="#c0c0c0"/><rect x="1129" y="560" width="1" height="1" fill="#c0c0c0"/><rect x="1129" y="580" width="1" height="1" fill="#c0c0c0"/>
</svg>
<span style="left:27px;top:3px">分时</span>
<span style="left:61px;top:3px">1分钟</span>
<span style="left:100px;top:3px">5分钟</span>
<span style="left:139px;top:3px">15分钟</span>
<span style="left:185px;top:3px">30分钟</span>
<span style="left:231px;top:3px">60分钟</span>
<span class="cy" style="left:278px;top:3px">日线</span>
<span style="left:312px;top:3px">周线</span>
<span style="left:345px;top:3px">月线</span>
<span style="left:378px;top:3px">多周期</span>
<span style="left:422px;top:3px">更多<span style="font-family:'Liberation Sans',sans-serif;margin-left:3px">&gt;</span></span>
<span class="btn" style="left:811px;width:34px;top:3px">复权</span>
<i class="vs" style="left:810px"></i>
<span class="btn" style="left:845px;width:35px;top:3px">叠加</span>
<i class="vs" style="left:844px"></i>
<span class="btn" style="left:880px;width:35px;top:3px">多股</span>
<i class="vs" style="left:879px"></i>
<span class="btn" style="left:915px;width:35px;top:3px">统计</span>
<i class="vs" style="left:914px"></i>
<span class="btn" style="left:950px;width:35px;top:3px">画线</span>
<i class="vs" style="left:949px"></i>
<span class="btn" style="left:985px;width:35px;top:3px">F10</span>
<i class="vs" style="left:984px"></i>
<span class="btn" style="left:1020px;width:35px;top:3px">标记</span>
<i class="vs" style="left:1019px"></i>
<span class="btn" style="left:1055px;width:35px;top:3px">+自选</span>
<i class="vs" style="left:1054px"></i>
<span class="btn" style="left:1090px;width:37px;top:3px">返回</span>
<i class="vs" style="left:1089px"></i>
<svg style="position:absolute;left:3px;top:3px" width="17" height="14" viewBox="0 0 17 14"><rect x="1.5" y="1.5" width="13" height="10" rx="2" fill="none" stroke="#909090" stroke-width="1.3"/><rect x="9" y="3" width="4" height="7" fill="#a8a8a8"/></svg>
<span style="left:3px;top:22px">西藏天路(日线.前复权)</span>
<svg style="position:absolute;left:127px;top:22px" width="14" height="14" viewBox="0 0 14 14"><circle cx="7" cy="7" r="6.2" fill="#808080"/><path d="M4 5.8 L7 8.8 L10 5.8" fill="none" stroke="#000" stroke-width="1.4"/></svg>
<svg style="position:absolute;left:1040px;top:22px" width="40" height="16" viewBox="0 0 40 16"><path d="M7.5 2.5 L12.5 7.5 L7.5 12.5 L2.5 7.5 Z" fill="none" stroke="#909090" stroke-width="1"/><rect x="20.5" y="2.5" width="11" height="10" rx="2" fill="none" stroke="#909090" stroke-width="1.2"/><rect x="27" y="4" width="3" height="7" fill="#b0b0b0"/></svg>
<svg style="position:absolute;left:912px;top:34px" width="20" height="14" viewBox="0 0 20 14"><path d="M4.5 8.5 L4.5 5.5 L8 5.5 M4.5 8.5 L7 10.5 M4.5 8.5 L8 8.5 L10 9.5 L12 9.5 L14 10.5 L16 10.5" fill="none" stroke="#c0c0c0" stroke-width="1"/></svg><span class="pl" style="left:931px;top:38px">19.50</span>
<svg style="position:absolute;left:12px;top:370px" width="18" height="14" viewBox="0 0 18 14"><path d="M2.5 7.5 L14 7.5 M2.5 7.5 L6 5 M2.5 7.5 L6 10.5" fill="none" stroke="#c0c0c0" stroke-width="1"/></svg><span class="pl" style="left:27px;top:371.5px">2.65</span>
<span class="ax" style="top:64px">18.00</span>
<span class="ax" style="top:104px">16.00</span>
<span class="ax" style="top:144px">14.00</span>
<span class="ax" style="top:184px">12.00</span>
<span class="ax" style="top:224px">10.00</span>
<span class="ax" style="top:264px">8.00</span>
<span class="ax" style="top:304px">6.00</span>
<span class="ax" style="top:344px">4.00</span>
<span class="ax" style="top:413px">100.0</span>
<span class="ax" style="top:453px">80.00</span>
<span class="ax" style="top:492px">60.00</span>
<span class="ax" style="top:532px">40.00</span>
<span class="ax" style="top:572px">20.00</span>
<span style="left:1076px;top:366px;width:50px;height:15px;background:#000080;color:#e0e0e0;line-height:15px;letter-spacing:0.4px;text-indent:1px">2.46</span>
<span class="tag" style="left:904px;background:#800000">涨</span>
<span class="tag" style="left:919px;width:5px;background:#008000"></span>
<span class="tag" style="left:924px;background:#a04800">榜</span>
<span class="tag" style="left:942px;background:#003070">财</span>
<!-- indicator title -->
<svg style="position:absolute;left:2px;top:399px" width="14" height="14" viewBox="0 0 14 14"><circle cx="7" cy="7" r="6" fill="#808080"/><path d="M4 5.8 L7 8.8 L10 5.8" fill="none" stroke="#000" stroke-width="1.4"/></svg>
<span style="left:18px;top:399px">股朋指标网</span>
<span style="left:83px;top:399px;color:#ffff00">主力吸筹: 32.67</span>
<span style="left:172px;top:399px;color:#ff0000">跑步进场: 0.00</span>
<span style="left:256px;top:399px;color:#ff00ff">多方强度大小: 1.78</span>
<span style="left:363px;top:399px;color:#32c832">空方强度大小: 99.66</span>
<span style="left:477px;top:399px;color:#00ffff">日内最低价: 11.82</span>
<!-- date axis -->
<i style="position:absolute;left:0;top:630px;width:978px;height:1px;background:#c80000"></i>
<i style="position:absolute;left:0;top:646px;width:978px;height:1px;background:#c80000"></i>
<span class="mo" style="left:1.5px">2024年</span>
<i class="mv" style="left:41px"></i>
<span class="mo" style="left:42.4px">3</span>
<i class="mv" style="left:95px"></i>
<span class="mo" style="left:96.4px">4</span>
<i class="mv" style="left:145px"></i>
<span class="mo" style="left:146.4px">5</span>
<i class="mv" style="left:196px"></i>
<span class="mo" style="left:197.4px">6</span>
<i class="mv" style="left:245px"></i>
<span class="mo" style="left:246.4px">7</span>
<i class="mv" style="left:302px"></i>
<span class="mo" style="left:303.4px">8</span>
<i class="mv" style="left:359px"></i>
<span class="mo" style="left:360.4px">9</span>
<i class="mv" style="left:407px"></i>
<span class="mo" style="left:408.4px">10</span>
<i class="mv" style="left:452px"></i>
<span class="mo" style="left:453.4px">11</span>
<i class="mv" style="left:506px"></i>
<span class="mo" style="left:507.4px">12</span>
<i class="mv" style="left:562px"></i>
<span class="mo" style="left:563.4px">1</span>
<i class="mv" style="left:607px"></i>
<span class="mo" style="left:608.4px">2</span>
<i class="mv" style="left:653px"></i>
<span class="mo" style="left:654.4px">3</span>
<i class="mv" style="left:707px"></i>
<span class="mo" style="left:708.4px">4</span>
<i class="mv" style="left:859px"></i>
<span class="mo" style="left:860.4px">7</span>
<i class="mv" style="left:917px"></i>
<span class="mo" style="left:918.4px">8</span>
<i class="mv" style="left:971px"></i>
<span class="mo" style="left:972.4px">9</span>
<i class="tk" style="left:54px"></i><i class="tk" style="left:67px"></i><i class="tk" style="left:79px"></i><i class="tk" style="left:105px"></i><i class="tk" style="left:117px"></i><i class="tk" style="left:130px"></i><i class="tk" style="left:155px"></i><i class="tk" style="left:167px"></i><i class="tk" style="left:180px"></i><i class="tk" style="left:205px"></i><i class="tk" style="left:218px"></i><i class="tk" style="left:230px"></i><i class="tk" style="left:255px"></i><i class="tk" style="left:268px"></i><i class="tk" style="left:280px"></i><i class="tk" style="left:293px"></i><i class="tk" style="left:318px"></i><i class="tk" style="left:331px"></i><i class="tk" style="left:343px"></i><i class="tk" style="left:368px"></i><i class="tk" style="left:381px"></i><i class="tk" style="left:393px"></i><i class="tk" style="left:418px"></i><i class="tk" style="left:431px"></i><i class="tk" style="left:443px"></i><i class="tk" style="left:456px"></i><i class="tk" style="left:469px"></i><i class="tk" style="left:481px"></i><i class="tk" style="left:494px"></i><i class="tk" style="left:519px"></i><i class="tk" style="left:531px"></i><i class="tk" style="left:544px"></i><i class="tk" style="left:556px"></i><i class="tk" style="left:569px"></i><i class="tk" style="left:582px"></i><i class="tk" style="left:594px"></i><i class="tk" style="left:619px"></i><i class="tk" style="left:632px"></i><i class="tk" style="left:644px"></i><i class="tk" style="left:669px"></i><i class="tk" style="left:682px"></i><i class="tk" style="left:694px"></i><i class="tk" style="left:720px"></i><i class="tk" style="left:732px"></i><i class="tk" style="left:745px"></i><i class="tk" style="left:832px"></i><i class="tk" style="left:845px"></i><i class="tk" style="left:870px"></i><i class="tk" style="left:883px"></i><i class="tk" style="left:895px"></i><i class="tk" style="left:908px"></i><i class="tk" style="left:933px"></i><i class="tk" style="left:945px"></i><i class="tk" style="left:958px"></i>
<span style="left:749px;top:631px;width:78px;height:15px;background:#000080;color:#e0e0e0;line-height:15px;letter-spacing:0px;text-indent:1px">2025/04/24/四</span>
<i class="bv" style="left:0"></i><i class="bv" style="left:42px"></i><i class="bv" style="left:73px"></i><i class="bv" style="left:115px"></i><i class="bv" style="left:145px"></i><i class="bv" style="left:187px"></i><i class="bv" style="left:229px"></i><i class="bv" style="left:271px"></i><i class="bv" style="left:313px"></i><i class="bv" style="left:355px"></i><i class="bv" style="left:397px"></i><i class="bv" style="left:439px"></i><i class="bv" style="left:481px"></i><i class="bv" style="left:523px"></i><i class="bv" style="left:565px"></i><i class="bv" style="left:607px"></i><i class="bv" style="left:649px"></i><i class="bv" style="left:691px"></i><i class="bv" style="left:733px"></i><i class="bv" style="left:775px"></i><i class="bv" style="left:817px"></i><i class="bv" style="left:859px"></i><i class="bv" style="left:901px"></i><i class="bv" style="left:943px"></i>
<i style="position:absolute;left:7px;top:649px;width:16px;height:1px;background:repeating-linear-gradient(90deg,#c0c0c0 0 1px,#000 1px 3px)"></i><i style="position:absolute;left:51px;top:649px;width:1px;height:1px;background:#c0c0c0"></i>
<i style="position:absolute;left:846px;top:648px;width:20px;height:2px;background:repeating-linear-gradient(90deg,#00e0e0 0 2px,#000 2px 4px)"></i>
<!-- watermark -->
<div style="position:absolute;left:978px;top:600px;width:152px;height:50px;background:#000"></div>
<span style="left:999px;top:608px;font-family:'Liberation Serif','Noto Serif CJK SC',serif;font-weight:900;font-size:20px;line-height:24px;color:#fff;letter-spacing:0.5px">乐淘公式网</span>
<span style="left:1001px;top:630px;font-family:'Liberation Serif','Noto Serif CJK SC',serif;font-weight:bold;font-size:15px;line-height:18px;color:#fff">www.60lt.com</span>
</div></body></html>
